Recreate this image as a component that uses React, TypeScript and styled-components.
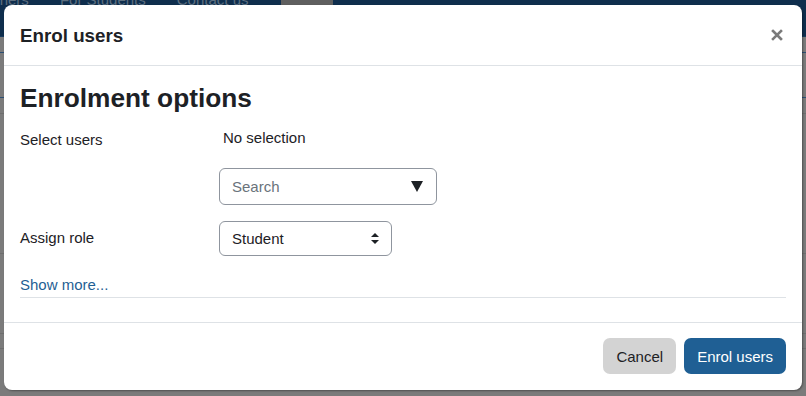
import React from "react";
import styled, { createGlobalStyle } from "styled-components";

const Global = createGlobalStyle`
  html, body { margin: 0; padding: 0; }
  body {
    width: 806px;
    height: 396px;
    overflow: hidden;
    font-family: "Liberation Sans", Arial, sans-serif;
    color: #1d2125;
  }
`;

const Page = styled.div`
  position: relative;
  width: 806px;
  height: 396px;
  background: #7b7b7b;
  overflow: hidden;
`;

const NavBar = styled.div`
  height: 36px;
  background: #0f2e4d;
  display: flex;
  align-items: flex-start;
  gap: 31px;
  margin-left: -32px;
  border-bottom: 1px solid #163a5e;
`;

const NavItem = styled.span`
  font-size: 15px;
  line-height: 1;
  color: #5d6f80;
  margin-top: -8px;
`;

const NavBox = styled.div`
  width: 52px;
  height: 36px;
  background: #5f5f5f;
  margin-left: 2px;
`;

const BgLine = styled.div<{ $c: string; $mt: number }>`
  height: 1px;
  background: ${(p) => p.$c};
  margin-top: ${(p) => p.$mt}px;
`;

const Modal = styled.div`
  position: absolute;
  left: 4px;
  top: 5px;
  width: 798px;
  height: 385px;
  background: #fff;
  border-radius: 8px;
  box-shadow: 1px 1px 2px rgba(0, 0, 0, 0.35);
  display: flex;
  flex-direction: column;
  box-sizing: border-box;
`;

const Header = styled.div`
  height: 61px;
  box-sizing: border-box;
  border-bottom: 1px solid #dee2e6;
  display: flex;
  align-items: center;
  justify-content: space-between;
  padding: 0 18px 0 16px;
`;

const HeaderTitle = styled.h5`
  margin: 0;
  font-size: 18.75px;
  font-weight: 700;
  line-height: 1.2;
  color: #1d2125;
  padding-top: 2px;
`;

const Close = styled.button`
  border: 0;
  background: none;
  padding: 0;
  width: 14px;
  height: 14px;
  display: flex;
  align-items: center;
  justify-content: center;
  cursor: pointer;
`;

const Body = styled.div`
  flex: 1;
  padding: 17px 16px 0 16px;
  border-bottom: 1px solid #dee2e6;
`;

const Title = styled.h3`
  margin: 0 0 14px 0;
  font-size: 26.25px;
  font-weight: 700;
  line-height: 1.2;
`;

const FormRow = styled.div<{ $mb: number }>`
  display: grid;
  grid-template-columns: 199px 1fr;
  margin-bottom: ${(p) => p.$mb}px;
`;

const Label = styled.div<{ $pt: number }>`
  font-size: 15px;
  line-height: 22px;
  padding-top: ${(p) => p.$pt}px;
`;

const Field = styled.div`
  display: flex;
  flex-direction: column;
  align-items: flex-start;
`;

const Selection = styled.div`
  font-size: 15px;
  line-height: 22px;
  padding-left: 4px;
  margin-top: -2px;
  margin-bottom: 19px;
`;

const SearchBox = styled.div`
  width: 218px;
  height: 37px;
  box-sizing: border-box;
  border: 1px solid #8f959e;
  border-radius: 6px;
  display: flex;
  align-items: center;
  justify-content: space-between;
  padding: 0 13px 0 12px;
  font-size: 15px;
  color: #6a737b;
`;

const SelectBox = styled.div`
  width: 173px;
  height: 35px;
  box-sizing: border-box;
  border: 1px solid #8f959e;
  border-radius: 6px;
  display: flex;
  align-items: center;
  justify-content: space-between;
  padding: 0 12px 0 12px;
  font-size: 15px;
  color: #1d2125;
`;

const MoreLink = styled.a`
  display: block;
  font-size: 15px;
  line-height: 22px;
  color: #1f5f94;
  text-decoration: none;
  padding-bottom: 1px;
  border-bottom: 1px solid #dee2e6;
`;

const Footer = styled.div`
  height: 67px;
  box-sizing: border-box;
  display: flex;
  align-items: center;
  justify-content: flex-end;
  gap: 8px;
  padding: 0 16px 1px 16px;
`;

const Button = styled.button<{ $primary?: boolean }>`
  height: 36px;
  border: 0;
  border-radius: 7px;
  padding: 0 13px;
  font-family: "Liberation Sans", Arial, sans-serif;
  font-size: 15px;
  background: ${(p) => (p.$primary ? "#1f5f94" : "#d3d3d3")};
  color: ${(p) => (p.$primary ? "#fff" : "#1d2125")};
  cursor: pointer;
`;

export default function App() {
  return (
    <>
      <Global />
      <Page>
        <NavBar>
          <NavItem>Teachers</NavItem>
          <NavItem>For Students</NavItem>
          <NavItem>Contact us</NavItem>
          <NavBox />
        </NavBar>
        <BgLine $c="#2b4f73" $mt={15} />
        <BgLine $c="#2b4f73" $mt={44} />
        <BgLine $c="#6e6e6e" $mt={15} />
        <BgLine $c="#6e6e6e" $mt={139} />
        <BgLine $c="#6e6e6e" $mt={79} />
        <BgLine $c="#6e6e6e" $mt={14} />
        <Modal>
          <Header>
            <HeaderTitle>Enrol users</HeaderTitle>
            <Close aria-label="Close">
              <svg width="12" height="12" viewBox="0 0 12 12">
                <path d="M2 2 L10 10 M10 2 L2 10" stroke="#7a7a7a" strokeWidth="2.6" strokeLinecap="square" />
              </svg>
            </Close>
          </Header>
          <Body>
            <Title>Enrolment options</Title>
            <FormRow $mb={16}>
              <Label $pt={0}>Select users</Label>
              <Field>
                <Selection>No selection</Selection>
                <SearchBox>
                  <span>Search</span>
                  <svg width="12" height="12" viewBox="0 0 12 12">
                    <path d="M0 1 L12 1 L6 12 Z" fill="#1d2125" />
                  </svg>
                </SearchBox>
              </Field>
            </FormRow>
            <FormRow $mb={18}>
              <Label $pt={6}>Assign role</Label>
              <Field>
                <SelectBox>
                  <span>Student</span>
                  <svg width="8" height="11" viewBox="0 0 8 11">
                    <path d="M4 0 L8 4 L0 4 Z M4 11 L8 7 L0 7 Z" fill="#1d2125" />
                  </svg>
                </SelectBox>
              </Field>
            </FormRow>
            <MoreLink href="#">Show more...</MoreLink>
          </Body>
          <Footer>
            <Button>Cancel</Button>
            <Button $primary>Enrol users</Button>
          </Footer>
        </Modal>
      </Page>
    </>
  );
}
